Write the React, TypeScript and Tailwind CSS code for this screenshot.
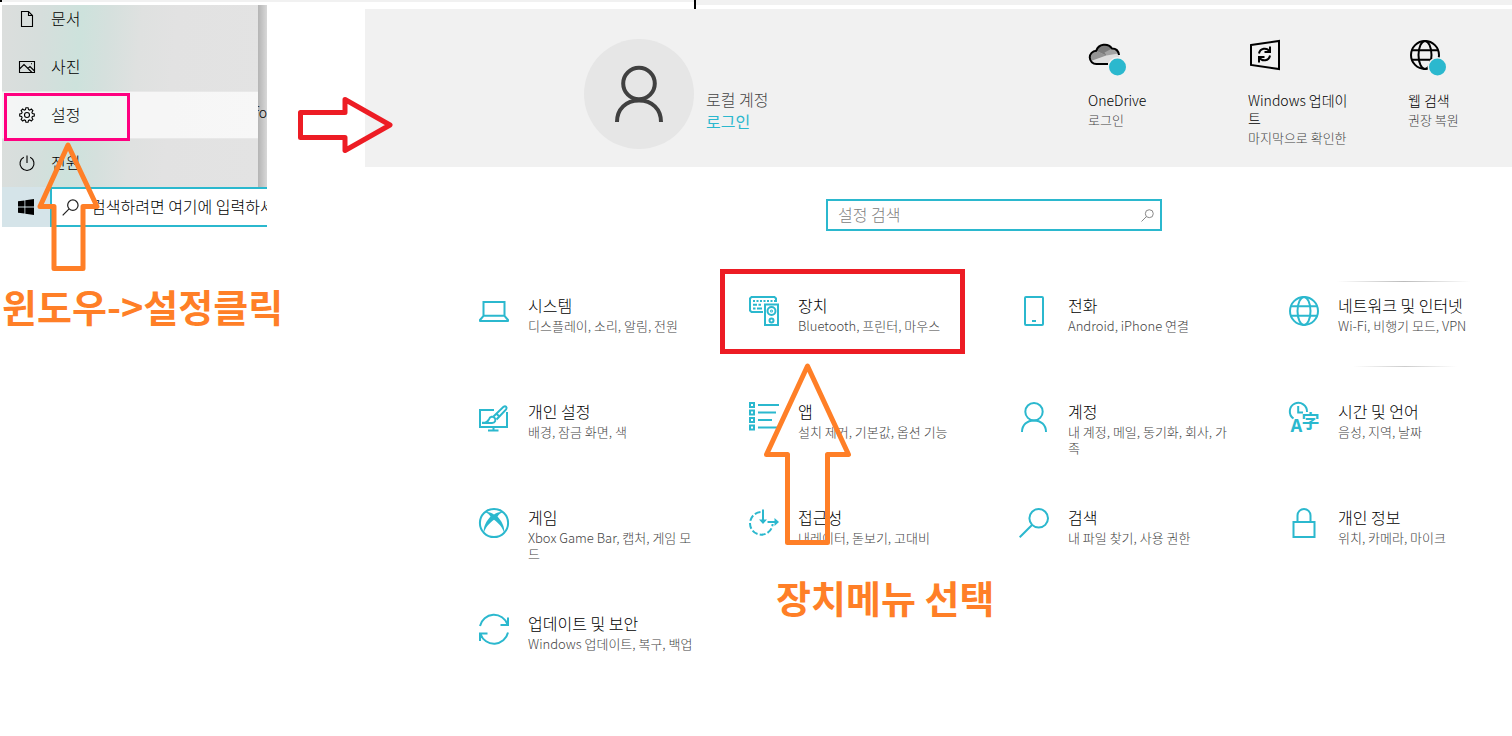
import type { ReactNode } from 'react';

type IconProps = { children: ReactNode };

function LineIcon({ children }: IconProps) {
  return (
    <svg
      width="30"
      height="30"
      viewBox="0 0 30 30"
      fill="none"
      stroke="currentColor"
      strokeWidth="2"
      className="shrink-0 overflow-visible text-[#2bb8ce]"
      aria-hidden="true"
    >
      {children}
    </svg>
  );
}

const icons = {
  system: (
    <LineIcon>
      <path d="M4.500 19.500V6h21v13.500" />
      <path d="M4.500 19.800h21l3.500 4.200v1H1v-1z" strokeLinejoin="round" />
    </LineIcon>
  ),
  devices: (
    <LineIcon>
      <path d="M14 16H2.500L1 14.500V2.500L2.500 1h23L27 2.500V6" />
      <path d="M4 5h22" strokeDasharray="2 1.500" />
      <path d="M4 8.800h4M9.500 8.800h2.500M4 12.500h2.500M8 12.500h5" />
      <path d="M16 8.500h13V29H16z" />
      <circle cx="22.500" cy="15" r="4" />
      <circle cx="22.500" cy="24.500" r="2" />
      <circle cx="22.500" cy="15" r="0.500" />
    </LineIcon>
  ),
  phone: (
    <LineIcon>
      <rect x="6" y="1" width="18" height="28" rx="1" />
      <path d="M13 25h4" />
    </LineIcon>
  ),
  network: (
    <LineIcon>
      <circle cx="15" cy="15" r="14" />
      <ellipse cx="15" cy="15" rx="6.500" ry="14" />
      <path d="M2 10.200h26M2 19.800h26" />
    </LineIcon>
  ),
  personalization: (
    <LineIcon>
      <path d="M15 8H1v17h27V10" />
      <path d="M14.500 25v3.500M9 28.500h10.500" />
      <path d="M14.500 14.500 24.500 4.800q1.600-1 2.600 0t0 2.600L17.500 17.500" />
      <path d="M4 20.800c4 0 5-1.300 6-3.700 1-2.600 4-3.100 5.600-1.200 1.700 2 .7 5-2.600 5.100H4z" />
      <path d="M17.500 11.800l3 3" />
    </LineIcon>
  ),
  apps: (
    <LineIcon>
      {[1, 8.5, 16, 23.5].map((y) => (
        <rect key={y} x="1" y={y} width="4" height="4" />
      ))}
      <path d="M9 3h21M9 10.500h18M9 18h14M9 25.500h19" />
    </LineIcon>
  ),
  accounts: (
    <LineIcon>
      <circle cx="15" cy="9.700" r="8.700" />
      <path d="M3 30c0-7 5-11.600 12-11.600S27 23 27 30" />
    </LineIcon>
  ),
  time: (
    <LineIcon>
      <path d="M4.500 16.500A8.600 8.600 0 1 1 18 10" />
      <path d="M9.200 4v6.500H14" />
      <text x="1.500" y="30" fontSize="17" fontWeight="700" fill="currentColor" stroke="none" fontFamily="Noto Sans, sans-serif">A</text>
      <text x="12.500" y="26" fontSize="18" fontWeight="700" fill="currentColor" stroke="none" fontFamily="Noto Sans CJK KR, sans-serif">字</text>
    </LineIcon>
  ),
  gaming: (
    <LineIcon>
      <circle cx="15" cy="15" r="14.100" />
      <path
        d="M6.500 4.200C9.500 3.600 12.500 4.600 15 6.500c2.500-1.900 5.500-2.900 8.500-2.300-1.800.7-3.500 2.200-5 4.200 3.800 4.200 7.500 10 6.700 16.600C23.800 19.800 19.500 15 15 11.800 10.500 15 6.200 19.800 4.800 25 4 18.400 7.700 12.600 11.500 8.400 10 6.400 8.300 4.900 6.500 4.200z"
        fill="currentColor"
        stroke="none"
      />
    </LineIcon>
  ),
  access: (
    <LineIcon>
      <path d="M11.500 4.100A11.300 11.300 0 1 0 23.600 16" strokeDasharray="6 2.200" />
      <path d="M14 1.500V14" />
      <path d="M10 11.500h8L14 16zM25.500 10l4.500 4-4.500 4z" fill="currentColor" stroke="none" />
      <path d="M18.500 14H27" />
    </LineIcon>
  ),
  search: (
    <LineIcon>
      <circle cx="19.700" cy="10.300" r="9.300" />
      <path d="M13 17 .7 29.300" />
    </LineIcon>
  ),
  privacy: (
    <LineIcon>
      <path d="M4.500 14h21v15h-21z" />
      <path d="M8.500 14V7.500a6.500 6.500 0 0 1 13 0V14" />
    </LineIcon>
  ),
  update: (
    <LineIcon>
      <path d="M1 12A14.300 14.300 0 0 1 28.500 10.500M29 3.500V11h-7.500" />
      <path d="M29 18.500A14.300 14.300 0 0 1 1.500 20M1 27v-7.500h7.500" />
    </LineIcon>
  ),
};

const categories: { icon: keyof typeof icons; title: string; text: string }[] = [
  { icon: 'system', title: '시스템', text: '디스플레이, 소리, 알림, 전원' },
  { icon: 'devices', title: '장치', text: 'Bluetooth, 프린터, 마우스' },
  { icon: 'phone', title: '전화', text: 'Android, iPhone 연결' },
  { icon: 'network', title: '네트워크 및 인터넷', text: 'Wi-Fi, 비행기 모드, VPN' },
  { icon: 'personalization', title: '개인 설정', text: '배경, 잠금 화면, 색' },
  { icon: 'apps', title: '앱', text: '설치 제거, 기본값, 옵션 기능' },
  { icon: 'accounts', title: '계정', text: '내 계정, 메일, 동기화, 회사, 가족' },
  { icon: 'time', title: '시간 및 언어', text: '음성, 지역, 날짜' },
  { icon: 'gaming', title: '게임', text: 'Xbox Game Bar, 캡처, 게임 모드' },
  { icon: 'access', title: '접근성', text: '내레이터, 돋보기, 고대비' },
  { icon: 'search', title: '검색', text: '내 파일 찾기, 사용 권한' },
  { icon: 'privacy', title: '개인 정보', text: '위치, 카메라, 마이크' },
  { icon: 'update', title: '업데이트 및 보안', text: 'Windows 업데이트, 복구, 백업' },
];

const startItems = [
  {
    label: '문서',
    icon: <path d="M2.500 .5h7l4 4v11h-11zM9.500 .5v4h4" />,
  },
  {
    label: '사진',
    icon: <path d="M.5 2.500h15v11H.5zM.5 10l4.500-4.500 8 8M9 9.500l2-2 4.500 4.500M12 4.800h1" />,
  },
  {
    label: '설정',
    icon: (
      <>
        <circle cx="8" cy="8" r="2.500" />
        <path d="M6.900.7h2.200l.4 1.900 1.200.5L12.300 2l1.600 1.600-1 1.700.5 1.200 1.900.4v2.200l-1.900.4-.5 1.200 1 1.700-1.600 1.600-1.600-1.100-1.200.5-.4 1.900H6.900l-.4-1.900-1.200-.5L3.700 14l-1.600-1.600 1-1.700-.5-1.200-1.900-.4V6.900l1.900-.4.500-1.200-1-1.700L3.700 2l1.600 1.100 1.200-.5z" />
      </>
    ),
  },
  {
    label: '전원',
    icon: <path d="M8 .5v7.500M4.800 2.300a7 7 0 1 0 6.400 0" />,
  },
];

function Magnifier({ size, className }: { size: number; className: string }) {
  return (
    <svg width={size} height={size} viewBox="0 0 18 18" fill="none" stroke="currentColor" strokeWidth="1.300" className={className} aria-hidden="true">
      <circle cx="11.500" cy="6.500" r="5.500" />
      <path d="M7.500 10.500.7 17.300" />
    </svg>
  );
}

function StartMenu() {
  return (
    <section className="ml-0.5 w-[265px] overflow-hidden">
      <div className="flex h-[182px] bg-[#cfcfcf]">
        <ul className="-mt-[10px] w-64 bg-[linear-gradient(95deg,#dcdedd_0%,#d6dedc_15%,#cde2dc_30%,#d5e0dd_40%,#dfe1e0_52%,#e2e2e2_65%,#e3e3e3_100%)]">
          {startItems.map((item) => (
            <li key={item.label} className="relative h-12">
              <button
                className={
                  'flex h-full w-full items-center gap-4 pl-[17px] text-left text-base leading-5 font-light text-black ' +
                  (item.label === '설정' ? 'border-y border-[#e8e8e8] bg-white/70' : '')
                }
              >
                <svg width="16" height="16" viewBox="0 0 16 16" fill="none" stroke="currentColor" strokeWidth="1.100" className="overflow-visible" aria-hidden="true">
                  {item.icon}
                </svg>
                <span className="pb-0.5">{item.label}</span>
              </button>
              {item.label === '설정' && (
                <span className="pointer-events-none absolute top-0.5 left-0.5 h-12 w-[126px] border-3 border-[#ff0080]" />
              )}
            </li>
          ))}
        </ul>
        <div className="flex w-[9px] justify-end overflow-hidden bg-linear-to-r from-[#b4b4b4] to-[#d8d8d8] pt-[97px] text-sm leading-5 font-light text-black">
          fo
        </div>
      </div>
      <div className="flex h-10">
        <button aria-label="시작" className="flex w-12 items-center justify-center bg-[#d5e4e9]">
          <svg width="16" height="16" viewBox="0 0 16 16" fill="black" aria-hidden="true">
            <path d="M0 2.300 6.500 1.400v6.200H0zM7.300 1.200 16 0v7.600H7.300zM0 8.400h6.500v6.200L0 13.700zM7.300 8.400H16V16l-8.700-1.200z" />
          </svg>
        </button>
        <label className="flex flex-1 items-center gap-3 overflow-hidden border-y-2 border-l-2 border-[#2bb8ce] bg-white pl-[10px]">
          <Magnifier size={17} className="shrink-0 text-[#222]" />
          <input
            type="text"
            aria-label="검색"
            placeholder="검색하려면 여기에 입력하세요"
            className="w-60 shrink-0 pb-0.5 text-base font-light outline-none placeholder:text-black"
          />
        </label>
      </div>
    </section>
  );
}

function QuickTile({ icon, title, text }: { icon: ReactNode; title: string; text: string }) {
  return (
    <a href="#" className="w-[110px] last:w-[104px]">
      <span className="flex h-[59px] items-start">{icon}</span>
      <span className="block text-sm leading-[18px] break-all text-black">{title}</span>
      <span className="mt-[3px] block text-[13px] leading-4 text-[#444]">{text}</span>
    </a>
  );
}

function AccountHeader() {
  return (
    <header className="flex h-[158px] items-start justify-between bg-[#f1f1f1] pl-[219px] font-light">
      <div className="flex gap-3 pt-[30px]">
        <div className="flex size-[110px] items-center justify-center rounded-full bg-[#e6e6e6]">
          <svg width="50" height="58" viewBox="0 0 50 58" fill="none" stroke="#404040" strokeWidth="4" aria-hidden="true">
            <circle cx="25" cy="18.500" r="15.800" />
            <path d="M3 57c0-13 9-21.500 22-21.500S47 44 47 57" />
          </svg>
        </div>
        <div className="flex flex-col pt-[49px] text-base leading-[22px]">
          <span className="text-[#444]">로컬 계정</span>
          <a href="#" className="font-normal text-[#2bb8ce]">로그인</a>
        </div>
      </div>
      <div className="flex gap-[50px] pt-[23px]">
        <QuickTile
          title="OneDrive"
          text="로그인"
          icon={
            <svg width="40" height="46" viewBox="0 0 40 46" aria-hidden="true">
              <path d="M8.500 32a6.600 6.600 0 0 1-.3-13.200A9 9 0 0 1 24 16.500a6.500 6.500 0 0 1 7 6.500v9z" fill="#dedede" />
              <path d="M3 29c-2-6 1-9.500 5.200-10.200l10 4.700z" fill="#949494" />
              <path d="M8.200 18.800A9 9 0 0 1 24 16.500l-6 7z" fill="#7b7b7b" />
              <path d="M24 16.500q5 .5 6.500 5l-12 2-2-3z" fill="#a3a3a3" />
              <path d="M20 32H8.500a6.600 6.600 0 0 1-.3-13.200A9 9 0 0 1 24 16.500c4 0 6.500 2.500 7 6.500" fill="none" stroke="black" strokeWidth="2" />
              <circle cx="29.500" cy="35" r="10" fill="#f1f1f1" />
              <circle cx="29.500" cy="35" r="8.500" fill="#2bb8ce" />
            </svg>
          }
        />
        <QuickTile
          title="Windows 업데이트"
          text="마지막으로 확인한"
          icon={
            <svg width="40" height="46" viewBox="0 0 40 46" fill="none" stroke="black" strokeWidth="2" aria-hidden="true">
              <path d="M3 13 31 9v28L3 33z" />
              <path d="M11 21.500c1-5.500 8-6.500 10.500-2M22 14.500V20h-5.500M22 23.500c-1 5.500-8 6.500-10.500 2M11 30.500V25h5.500" />
            </svg>
          }
        />
        <QuickTile
          title="웹 검색"
          text="권장 복원"
          icon={
            <svg width="40" height="46" viewBox="0 0 40 46" fill="none" stroke="black" strokeWidth="2" aria-hidden="true">
              <circle cx="17" cy="23" r="14" />
              <ellipse cx="17" cy="23" rx="6.500" ry="14" />
              <path d="M4 18.200h26M4 27.800h26" />
              <circle cx="29.500" cy="35" r="10" fill="#f1f1f1" stroke="none" />
              <circle cx="29.500" cy="35" r="8.500" fill="#2bb8ce" stroke="none" />
            </svg>
          }
        />
      </div>
    </header>
  );
}

function CategoryGrid() {
  return (
    <nav className="mt-[39px] grid auto-rows-[106px] grid-cols-[270fr_270fr_270fr_223fr] pl-[114px] font-light">
      {categories.map((c) => (
        <div key={c.icon} className="relative pt-[26px]">
          <a href="#" className="flex gap-[19px]">
            {icons[c.icon]}
            <span className="max-w-[168px]">
              <span className="block text-base leading-[18px] whitespace-nowrap text-black">{c.title}</span>
              <span className="mt-1 block text-[13px] leading-4 break-all text-[#444]">{c.text}</span>
            </span>
          </a>
          {c.icon === 'devices' && (
            <span className="pointer-events-none absolute -top-px -left-[29px] h-[85px] w-[245px] border-5 border-[#ed1c24]" />
          )}
          {c.icon === 'network' && (
            <>
              <span className="absolute top-[11px] left-12 h-px w-[134px] bg-linear-to-r from-transparent via-[#bbb] to-transparent" />
              <span className="absolute top-24 left-16 h-px w-[104px] bg-linear-to-r from-transparent via-[#ccc] to-transparent" />
            </>
          )}
        </div>
      ))}
      <p className="pl-[27px] text-[38px] leading-[18px] font-bold whitespace-nowrap text-[#ff7f27]">장치메뉴 선택</p>
    </nav>
  );
}

// Hand-drawn pointers that sit on top of both windows
function Arrows() {
  return (
    <svg
      width="860"
      height="560"
      viewBox="0 0 860 560"
      fill="none"
      strokeWidth="5"
      strokeLinejoin="round"
      className="pointer-events-none absolute top-0 left-0"
      aria-hidden="true"
    >
      <path d="M300.500 112.500H345V99.500L390 125 345 150.500V137.500H300.500z" stroke="#ed1c24" />
      <path d="M68 145 97 206.500H83V268.500H54V206.500H40z" stroke="#ff7f27" />
      <path d="M807.500 366 848.500 454.500H827.500V542.500H787.500V454.500H766.500z" stroke="#ff7f27" />
    </svg>
  );
}

export default function App() {
  return (
    <div className="relative min-h-screen overflow-hidden bg-white font-['Noto_Sans_CJK_KR',sans-serif]">
      <div className="flex h-[5px]">
        <div className="h-0.5 w-[694px] border-l-2 border-black bg-[#f1f1f1]" />
        <div className="h-[9px] w-0.5 bg-black" />
        <div className="flex-1 bg-[#f1f1f1]" />
      </div>
      <div className="flex">
        <aside className="w-[365px] shrink-0">
          <StartMenu />
          <p className="mt-[55px] pl-0.5 text-[38px] leading-12 font-bold whitespace-nowrap text-[#ff7f27]">윈도우-&gt;설정클릭</p>
        </aside>
        <main className="min-w-0 flex-1 pt-1">
          <AccountHeader />
          <div className="mt-8 flex justify-center pl-[111px]">
            <label className="flex h-8 w-[336px] items-center border-2 border-[#2bb8ce] pr-1.5 pl-[10px]">
              <input type="text" aria-label="설정 검색" placeholder="설정 검색" className="min-w-0 flex-1 pb-0.5 text-base font-light outline-none placeholder:text-[#808080]" />
              <Magnifier size={13} className="text-[#808080]" />
            </label>
          </div>
          <CategoryGrid />
        </main>
      </div>
      <Arrows />
    </div>
  );
}
